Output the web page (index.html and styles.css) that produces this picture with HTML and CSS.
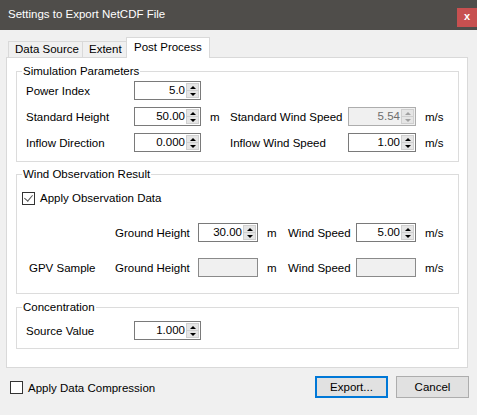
FILE: index.html
```html
<!DOCTYPE html>
<html lang="en">
<head>
  <meta charset="UTF-8">
  <title>Settings to Export NetCDF File</title>
  <link rel="stylesheet" href="styles.css">
</head>
<body>
  <div class="window">
    <!-- Title bar -->
    <div class="titlebar">
      <span class="title">Settings to Export NetCDF File</span>
      <span class="close">x</span>
    </div>

    <!-- Tabs -->
    <div class="tabs">
      <div class="tab">Data Source</div>
      <div class="tab">Extent</div>
      <div class="tab active">Post Process</div>
    </div>

    <div class="panel">
      <!-- Simulation Parameters -->
      <fieldset class="group">
        <legend>Simulation Parameters</legend>
        <div class="grid sim-grid">
          <span class="label">Power Index</span>
          <div class="spin"><span class="val">5.0</span><span class="arrows"><i class="up"></i><i class="down"></i></span></div>
          <span></span><span></span><span></span><span></span>

          <span class="label">Standard Height</span>
          <div class="spin"><span class="val">50.00</span><span class="arrows"><i class="up"></i><i class="down"></i></span></div>
          <span class="unit m">m</span>
          <span class="label">Standard Wind Speed</span>
          <div class="spin disabled"><span class="val">5.54</span><span class="arrows"><i class="up"></i><i class="down"></i></span></div>
          <span class="unit">m/s</span>

          <span class="label">Inflow Direction</span>
          <div class="spin"><span class="val">0.000</span><span class="arrows"><i class="up"></i><i class="down"></i></span></div>
          <span></span>
          <span class="label">Inflow Wind Speed</span>
          <div class="spin"><span class="val">1.00</span><span class="arrows"><i class="up"></i><i class="down"></i></span></div>
          <span class="unit">m/s</span>
        </div>
      </fieldset>

      <!-- Wind Observation Result -->
      <fieldset class="group wind">
        <legend>Wind Observation Result</legend>
        <label class="check obs">
          <span class="box checked"></span>Apply Observation Data
        </label>
        <div class="grid wind-grid">
          <span></span>
          <span class="label">Ground Height</span>
          <div class="spin"><span class="val">30.00</span><span class="arrows"><i class="up"></i><i class="down"></i></span></div>
          <span class="unit m">m</span>
          <span class="label">Wind Speed</span>
          <div class="spin"><span class="val">5.00</span><span class="arrows"><i class="up"></i><i class="down"></i></span></div>
          <span class="unit">m/s</span>

          <span class="label gpv">GPV Sample</span>
          <span class="label">Ground Height</span>
          <div class="field off"></div>
          <span class="unit m">m</span>
          <span class="label">Wind Speed</span>
          <div class="field off"></div>
          <span class="unit">m/s</span>
        </div>
      </fieldset>

      <!-- Concentration -->
      <fieldset class="group conc">
        <legend>Concentration</legend>
        <div class="grid sim-grid">
          <span class="label">Source Value</span>
          <div class="spin"><span class="val">1.000</span><span class="arrows"><i class="up"></i><i class="down"></i></span></div>
        </div>
      </fieldset>
    </div>

    <!-- Footer -->
    <div class="footer">
      <label class="check">
        <span class="box"></span>Apply Data Compression
      </label>
      <div class="buttons">
        <button class="btn default">Export...</button>
        <button class="btn">Cancel</button>
      </div>
    </div>
  </div>
</body>
</html>
```

FILE: styles.css
```css
* {
  box-sizing: border-box;
}
body {
  margin: 0;
  background-color: #f0f0f0;
  font-family: "Liberation Sans", Arial, sans-serif;
  font-size: 11.5px;
  color: #000;
}
.window {
  width: 477px;
  height: 415px;
}
.titlebar {
  height: 30px;
  background-color: #4f4d4a;
  color: white;
  display: flex;
  justify-content: space-between;
  align-items: flex-start;
}
.title {
  padding: 8px 0 0 8px;
  font-size: 11.5px;
}
.close {
  margin-top: 8px;
  width: 20px;
  height: 19px;
  background-color: #c75050;
  color: white;
  font-weight: bold;
  font-size: 11px;
  text-align: center;
  line-height: 17px;
}
.tabs {
  height: 27px;
  display: flex;
  align-items: flex-end;
  padding-left: 8px;
  position: relative;
  z-index: 1;
}
.tab {
  height: 16px;
  padding: 0 0 0 6px;
  border: 1px solid #d9d9d9;
  border-bottom: none;
  background-color: #f0f0f0;
  line-height: 15px;
  margin-right: -1px;
  white-space: nowrap;
}
.tab:nth-child(1) { width: 75px; }
.tab:nth-child(2) { width: 45px; }
.tab.active {
  width: 84px;
  height: 21px;
  margin-bottom: -1px;
  background-color: white;
  line-height: 18px;
  padding-left: 7px;
}
.panel {
  margin-left: 6px;
  width: 462px;
  height: 311px;
  background-color: white;
  border: 1px solid #d9d9d9;
  padding: 6px 8px 0 9px;
}
.group {
  margin: 0;
  padding: 3px 0 9px 9px;
  border: 1px solid #dcdcdc;
}
.group legend {
  margin-left: -4px;
  padding: 0 1px;
  line-height: 14px;
}
.grid {
  display: grid;
  row-gap: 7px;
  grid-auto-rows: 19px;
  align-items: center;
  white-space: nowrap;
}
.sim-grid {
  grid-template-columns: 108px 67px 29px 118px 68px auto;
}
.unit {
  padding-left: 9px;
}
.unit.m {
  padding-left: 9px;
}
.spin {
  height: 19px;
  border: 1px solid #7a7a7a;
  display: flex;
  align-items: stretch;
  background-color: white;
}
.spin .val {
  flex: 1;
  text-align: right;
  padding-right: 1px;
  line-height: 17px;
}
.arrows {
  width: 14px;
  display: flex;
  flex-direction: column;
  padding: 1px 1px 1px 0;
}
.arrows i {
  flex: 1;
  background-color: #e5e5e5;
  border: 1px solid #cfcfcf;
  position: relative;
}
.arrows i.down {
  border-top: none;
}
.arrows i::after {
  content: "";
  position: absolute;
  left: 3px;
  border-left: 3px solid transparent;
  border-right: 3px solid transparent;
}
.arrows i.up::after {
  top: 2px;
  border-bottom: 3px solid #000;
}
.arrows i.down::after {
  top: 2px;
  border-top: 3px solid #000;
}
.spin.disabled {
  background-color: #f0f0f0;
  border-color: #adadad;
  color: #6d6d6d;
}
.spin.disabled .arrows i.up::after {
  border-bottom-color: #a0a0a0;
}
.spin.disabled .arrows i.down::after {
  border-top-color: #a0a0a0;
}
.wind {
  margin-top: 5px;
  padding: 10px 0 16px 9px;
}
.check {
  display: flex;
  align-items: center;
  white-space: nowrap;
}
.box {
  width: 13px;
  height: 13px;
  border: 1px solid #333;
  background-color: white;
  margin-right: 5px;
  position: relative;
}
.box.checked::after {
  content: "";
  position: absolute;
  left: 3px;
  top: 0px;
  width: 4px;
  height: 7px;
  border-right: 1px solid #555;
  border-bottom: 1px solid #555;
  transform: rotate(40deg);
}
.obs {
  margin-left: -4px;
  height: 14px;
}
.wind-grid {
  margin-top: 18px;
  row-gap: 16px;
  grid-template-columns: 89px 83px 60px 30px 68px 60px auto;
}
.wind-grid .gpv {
  padding-left: 3px;
}
.field {
  height: 19px;
  border: 1px solid #7a7a7a;
}
.field.off {
  background-color: #f0f0f0;
  border-color: #8a8a8a;
}
.conc {
  margin-top: 6px;
  padding: 7px 0 8px 9px;
}
.footer {
  display: flex;
  justify-content: space-between;
  align-items: center;
  padding: 8px 8px 0 10px;
}
.footer .check {
  margin-top: 1px;
}
.buttons {
  display: flex;
  gap: 8px;
}
.btn {
  width: 73px;
  height: 22px;
  font-family: "Liberation Sans", Arial, sans-serif;
  font-size: 11.5px;
  background-color: #e1e1e1;
  border: 1px solid #adadad;
  padding: 0;
}
.btn.default {
  border: 2px solid #0078d7;
}
```
